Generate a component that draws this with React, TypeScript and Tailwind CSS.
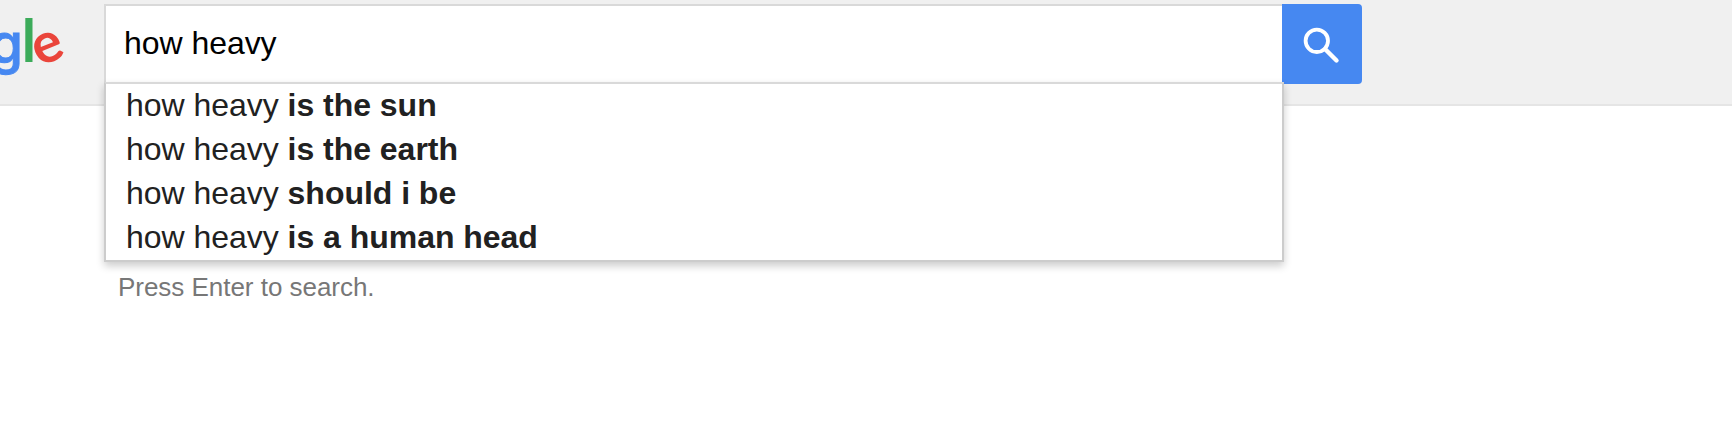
interface Suggestion {
    query: string
    completion: string
}

const suggestions: Suggestion[] = [
    { query: 'how heavy', completion: 'is the sun' },
    { query: 'how heavy', completion: 'is the earth' },
    { query: 'how heavy', completion: 'should i be' },
    { query: 'how heavy', completion: 'is a human head' },
]

function Logo() {
    return (
        <svg className="h-[104px] w-[104px] shrink-0" viewBox="0 0 104 104">
            <text
                className="font-['Inter',sans-serif] font-medium"
                x="-10.5"
                y="62.6"
                fontSize="54"
                fill="#4688f1"
                stroke="#4688f1"
                strokeWidth="1"
            >
                g
            </text>
            <rect x="25.3" y="18" width="7.2" height="44" fill="#3cab5a" />
            {/* The last letter leans back around its own centre */}
            <text
                className="font-['Lato',sans-serif] font-bold"
                x="47.8"
                y="62.3"
                fontSize="56"
                textAnchor="middle"
                fill="#ea453b"
                transform="rotate(-22 47.8 48)"
            >
                e
            </text>
        </svg>
    )
}

function SearchIcon() {
    return (
        <svg className="h-full w-full" viewBox="0 0 80 80" fill="none" stroke="#fff">
            <circle cx="34.8" cy="36.8" r="11.2" strokeWidth="3.8" />
            <path d="M43 45 54.5 56.5" strokeWidth="4.4" strokeLinecap="round" />
        </svg>
    )
}

function SuggestionList({ items }: { items: Suggestion[] }) {
    return (
        <ul className="absolute top-[78px] left-0 w-[1180px] border-2 border-[#ccc] border-t-[#d9d9d9] bg-white shadow-[0_4px_8px_rgba(0,0,0,0.2)]">
            {items.map((item) => (
                <li
                    key={item.completion}
                    className="h-11 pl-5 text-[32px] leading-[42px] tracking-[-0.03px] text-[#212121]"
                >
                    {item.query} <b>{item.completion}</b>
                </li>
            ))}
        </ul>
    )
}

export default function App() {
    return (
        <div className="h-[432px] overflow-hidden bg-white font-['Liberation_Sans',Arial,sans-serif]">
            <header className="flex h-[106px] border-b-2 border-[#e5e5e5] bg-[#f0f0f0]">
                <Logo />
                <div className="relative mt-1 flex h-20">
                    <div className="w-[1178px] border-2 border-r-0 border-[#d9d9d9] bg-white pl-[18px] text-[32px] leading-[74px] tracking-[-0.05px] text-black">
                        how heavy
                    </div>
                    <button className="h-20 w-20 rounded-r bg-[#4688f1]" aria-label="Search">
                        <SearchIcon />
                    </button>
                    <SuggestionList items={suggestions} />
                </div>
            </header>
            <p className="mt-[166px] ml-[118px] text-[26px] leading-[30px] tracking-[-0.03px] text-[#777]">
                Press Enter to search.
            </p>
        </div>
    )
}
